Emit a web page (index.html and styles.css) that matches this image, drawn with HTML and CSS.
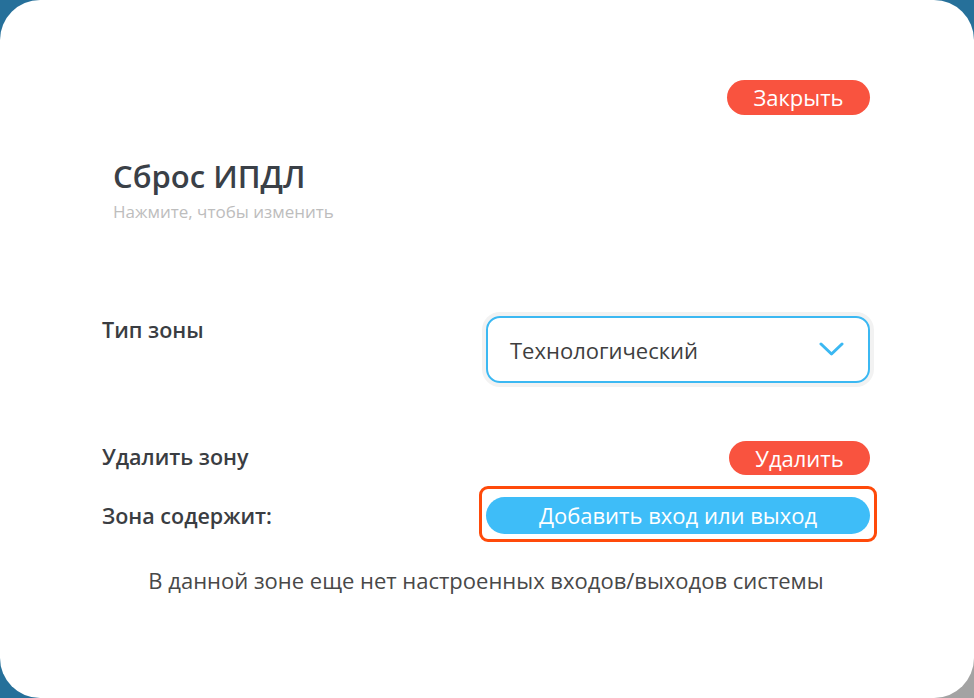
FILE: index.html
```html
<!DOCTYPE html>
<html lang="ru">
<head>
<meta charset="utf-8">
<title>Сброс ИПДЛ</title>
<link rel="stylesheet" href="styles.css">
</head>
<body>
<div class="card">
  <div class="header">
    <button class="btn btn-red btn-close">Закрыть</button>
  </div>
  <div class="title-block">
    <div class="title">Сброс ИПДЛ</div>
    <div class="subtitle">Нажмите, чтобы изменить</div>
  </div>
  <div class="row row-type">
    <div class="label">Тип зоны</div>
    <div class="select">
      <span class="select-value">Технологический</span>
      <svg class="chevron" width="25" height="15" viewBox="0 0 25 15"><path d="M2 2 L12.5 12 L23 2" fill="none" stroke="#3bb8f2" stroke-width="3" stroke-linecap="round" stroke-linejoin="round"/></svg>
    </div>
  </div>
  <div class="row row-delete">
    <div class="label">Удалить зону</div>
    <button class="btn btn-red btn-delete">Удалить</button>
  </div>
  <div class="row row-contains">
    <div class="label">Зона содержит:</div>
    <div class="highlight">
      <button class="btn btn-blue btn-add">Добавить вход или выход</button>
    </div>
  </div>
  <div class="empty">В данной зоне еще нет настроенных входов/выходов системы</div>
</div>
</body>
</html>
```
FILE: styles.css
```css
html, body {
  margin: 0;
  padding: 0;
  width: 974px;
  height: 698px;
  overflow: hidden;
}
body {
  background: linear-gradient(#a3a3a3, #a3a3a3) right bottom / 50% 50% no-repeat, #26709a;
  font-family: "Open Sans", "Noto Sans", sans-serif;
}
.card {
  box-sizing: border-box;
  width: 974px;
  height: 698px;
  background: #fff;
  border-radius: 40px;
  padding: 80px 104px 0 102px;
  display: flex;
  flex-direction: column;
}
.header {
  display: flex;
  justify-content: flex-end;
}
.btn {
  border: none;
  font-family: "Open Sans", "Noto Sans", sans-serif;
  font-size: 22px;
  color: #fff;
  padding: 0;
  cursor: pointer;
}
.btn-red {
  background: #f9533f;
}
.btn-close {
  width: 143px;
  height: 35px;
  border-radius: 18px;
  line-height: 35px;
}
.title-block {
  margin-top: 40px;
  padding-left: 11px;
}
.title {
  font-size: 31px;
  font-weight: 600;
  color: #3a4047;
}
.subtitle {
  margin-top: 3px;
  font-size: 17px;
  color: #bdbdbd;
}
.row {
  display: flex;
  justify-content: space-between;
  align-items: center;
}
.row-type {
  align-items: flex-start;
  margin-top: 93px;
}
.label {
  font-size: 21.5px;
  font-weight: 600;
  color: #3a3d42;
}
.row-type .label {
  margin-top: -1px;
}
.row-delete .label {
  margin-top: -4px;
}
.select {
  box-sizing: border-box;
  width: 384px;
  height: 67px;
  border: 2px solid #3bb8f2;
  border-radius: 14px;
  box-shadow: 0 0 0 4px #f2f2f2;
  display: flex;
  align-items: center;
  justify-content: space-between;
  padding: 0 24px 0 22px;
}
.select-value {
  font-size: 22px;
  color: #3e3e3e;
}
.chevron {
  display: block;
}
.row-delete {
  margin-top: 58px;
}
.btn-delete {
  width: 141px;
  height: 34px;
  border-radius: 17px;
  line-height: 34px;
}
.row-contains {
  margin-top: 22px;
}
.highlight {
  position: relative;
}
.highlight::after {
  content: "";
  position: absolute;
  top: -11px;
  left: -7px;
  right: -7px;
  bottom: -8px;
  border: 3px solid #ff4a0a;
  border-radius: 9px;
  pointer-events: none;
}
.btn-blue {
  background: #3ebdf8;
}
.btn-add {
  display: block;
  width: 384px;
  height: 37px;
  border-radius: 19px;
  line-height: 37px;
}
.empty {
  margin-top: 31px;
  text-align: center;
  font-size: 22px;
  color: #484848;
}
```
